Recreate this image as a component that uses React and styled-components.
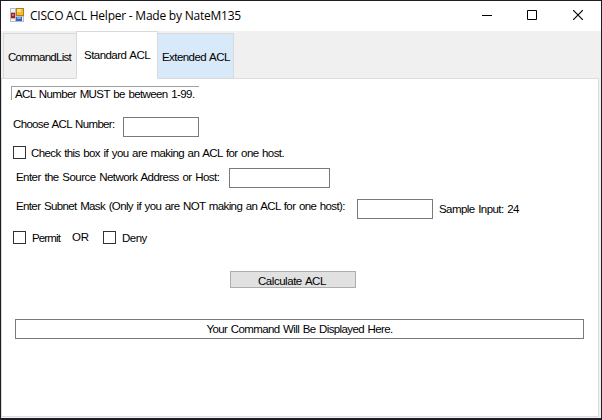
import React from 'react';
import styled, { createGlobalStyle } from 'styled-components';

const GlobalStyle = createGlobalStyle`
  * { box-sizing: border-box; }
  body { margin: 0; background: #1d1c22; }
`;

const Window = styled.main`
  display: flex;
  flex-direction: column;
  width: 602px;
  height: 420px;
  padding: 1px 1px 2px;
  background: #1d1c22;
  color: #000;
  font: 11.5px/14px "Liberation Sans", Arial, sans-serif;
  word-spacing: 1px;
`;

const TitleBar = styled.header`
  display: flex;
  align-items: flex-start;
  height: 30px;
  flex: none;
  padding-left: 9px;
  background: #fff;
`;

const Title = styled.h1`
  flex: 1;
  margin: 7px 0 0 6px;
  font: 400 12px/16px "Open Sans", sans-serif;
  letter-spacing: -0.23px;
  word-spacing: 0;
  white-space: nowrap;
`;

const WindowButton = styled.button`
  display: flex;
  align-items: center;
  justify-content: center;
  width: 46px;
  height: 28px;
  padding: 0;
  border: 0;
  background: transparent;
  &:first-of-type { width: 45px; }
`;

const Body = styled.div`
  display: flex;
  flex-direction: column;
  flex: 1;
  padding: 0 2px 1px 0;
  background: #f0f0f0;
`;

const TabStrip = styled.nav`
  display: flex;
  align-items: flex-end;
  height: 48px;
  flex: none;
  padding-left: 2px;
  margin-bottom: -1px;
`;

const Tab = styled.button`
  position: relative;
  width: ${p => p.$width}px;
  height: ${p => (p.$active ? 48 : 46)}px;
  padding: ${p => (p.$active ? '16px 0 0 7px' : p.$pad)};
  border: 1px solid #d9d9d9;
  border-bottom-color: ${p => (p.$active ? '#fff' : '#d9d9d9')};
  border-right-width: ${p => (p.$joined ? 0 : 1)}px;
  border-left-width: ${p => (p.$hot ? 0 : 1)}px;
  background: ${p => (p.$active ? '#fff' : p.$hot ? '#d8e9f9' : '#f0f0f0')};
  color: #000;
  font: inherit;
  line-height: 14px;
  letter-spacing: ${p => p.$track}px;
  word-spacing: 1px;
  text-align: left;
  white-space: nowrap;
  display: flex;
  align-items: flex-start;
`;

const Panel = styled.section`
  flex: 1;
  padding: 7px 0 0 9px;
  border: 1px solid #dcdcdc;
  background: #fff;
`;

const Row = styled.div`
  display: flex;
  align-items: flex-start;
  height: ${p => p.$height}px;
`;

const Notice = styled.div`
  width: 188px;
  height: 14px;
  padding-left: 3px;
  border-top: 1px solid #a0a0a0;
  border-left: 1px solid #a0a0a0;
  letter-spacing: -0.6px;
  white-space: nowrap;
`;

const Label = styled.label`
  width: ${p => p.$width}px;
  flex: none;
  margin: ${p => p.$top || 0}px 0 0 ${p => p.$left}px;
  letter-spacing: ${p => p.$track}px;
  white-space: nowrap;
`;

const TextBox = styled.input`
  width: ${p => p.$width}px;
  height: 20px;
  flex: none;
  margin: 0;
  padding: 0 0 1px;
  border: 1px solid #7a7a7a;
  border-radius: 0;
  outline: 0;
  background: #fff;
  color: #000;
  font: inherit;
  letter-spacing: -0.62px;
  word-spacing: 1px;
  text-align: center;
`;

const Check = styled.input.attrs({ type: 'checkbox' })`
  appearance: none;
  width: 13px;
  height: 13px;
  flex: none;
  margin: ${p => p.$top || 0}px 0 0 ${p => p.$left}px;
  border: 1px solid #333;
  background: #fff;
`;

const ActionButton = styled.button`
  width: 126px;
  height: 17px;
  margin-left: 219px;
  padding: 2px 0 0 27px;
  display: flex;
  border: 1px solid #adadad;
  background: #e1e1e1;
  color: #000;
  font: inherit;
  line-height: 14px;
  letter-spacing: -0.46px;
  word-spacing: 1px;
`;

const Output = styled(TextBox)`
  display: block;
  margin-left: 4px;
`;

const IconSvg = styled.svg`
  flex: none;
  margin-top: 7px;
`;

const AppIcon = () => (
  <IconSvg width="14" height="14" viewBox="0 0 14 14" shapeRendering="crispEdges">
    <path fill="#b9bcc1" d="M0 0h14v14H0z" />
    <path fill="#f2f3f5" d="M1 1h4v3H1zM1 11h4v2H1zM12 9h1v4h-1z" />
    <path fill="#a81d1d" d="M1 5h4v5H1z" />
    <path fill="#e46a5c" d="M2 6h2v2H2z" />
    <path fill="#b57d12" d="M6 0h8v8H6z" />
    <path fill="#f4bd31" d="M7 1h6v6H7z" />
    <path fill="#ffe38a" d="M7 1h4v3H7z" />
    <path fill="#2f66c4" d="M6 9h6v4H6z" />
    <path fill="#75a9ee" d="M7 9h4v2H7z" />
  </IconSvg>
);

const MinimizeIcon = () => (
  <svg width="10" height="10" viewBox="0 0 10 10" shapeRendering="crispEdges"><path fill="#000" d="M0 5h10v1H0z" /></svg>
);
const MaximizeIcon = () => (
  <svg width="10" height="10" viewBox="0 0 10 10"><path fill="none" stroke="#000" d="M.5.5h9v9h-9z" /></svg>
);
const CloseIcon = () => (
  <svg width="10" height="10" viewBox="0 0 10 10"><path stroke="#000" strokeWidth="1.15" d="M0 0l10 10M10 0L0 10" /></svg>
);

export default function App() {
  return (
    <>
      <GlobalStyle />
      <Window>
        <TitleBar>
          <AppIcon />
          <Title>CISCO ACL Helper - Made by NateM135</Title>
          <WindowButton aria-label="Minimize"><MinimizeIcon /></WindowButton>
          <WindowButton aria-label="Maximize"><MaximizeIcon /></WindowButton>
          <WindowButton aria-label="Close"><CloseIcon /></WindowButton>
        </TitleBar>
        <Body>
          <TabStrip>
            <Tab $width={73} $joined $pad="16px 0 0 4px" $track={-0.72}>CommandList</Tab>
            <Tab $width={82} $active $track={-0.54}>Standard ACL</Tab>
            <Tab $width={76} $hot $pad="16px 0 0 4px" $track={-0.56}>Extended ACL</Tab>
          </TabStrip>
          <Panel>
            <Row $height={31}><Notice>ACL Number MUST be between 1-99.</Notice></Row>
            <Row $height={29}>
              <Label $left={2} $width={110} $track={-0.66}>Choose ACL Number:</Label>
              <TextBox $width={76} />
            </Row>
            <Row $height={22}>
              <Check $left={2} id="host" />
              <Label htmlFor="host" $left={5} $width={260} $track={-0.6}>Check this box if you are making an ACL for one host.</Label>
            </Row>
            <Row $height={31}>
              <Label $left={5} $top={2} $width={213} $track={-0.55}>Enter the Source Network Address or Host:</Label>
              <TextBox $width={101} />
            </Row>
            <Row $height={31}>
              <Label $left={5} $width={341} $track={-0.63}>Enter Subnet Mask (Only if you are NOT making an ACL for one host):</Label>
              <TextBox $width={76} />
              <Label $left={6} $top={3} $width={90} $track={-0.57}>Sample Input: 24</Label>
            </Row>
            <Row $height={41}>
              <Check $left={2} $top={1} id="permit" />
              <Label htmlFor="permit" $left={6} $top={1} $width={40} $track={-0.85}>Permit</Label>
              <Label $left={0} $width={31} $track={-0.3}>OR</Label>
              <Check $left={0} $top={1} id="deny" />
              <Label htmlFor="deny" $left={6} $top={1} $width={40} $track={-0.5}>Deny</Label>
            </Row>
            <Row $height={48}><ActionButton>Calculate ACL</ActionButton></Row>
            <Output $width={569} readOnly value="Your Command Will Be Displayed Here." />
          </Panel>
        </Body>
      </Window>
    </>
  );
}
